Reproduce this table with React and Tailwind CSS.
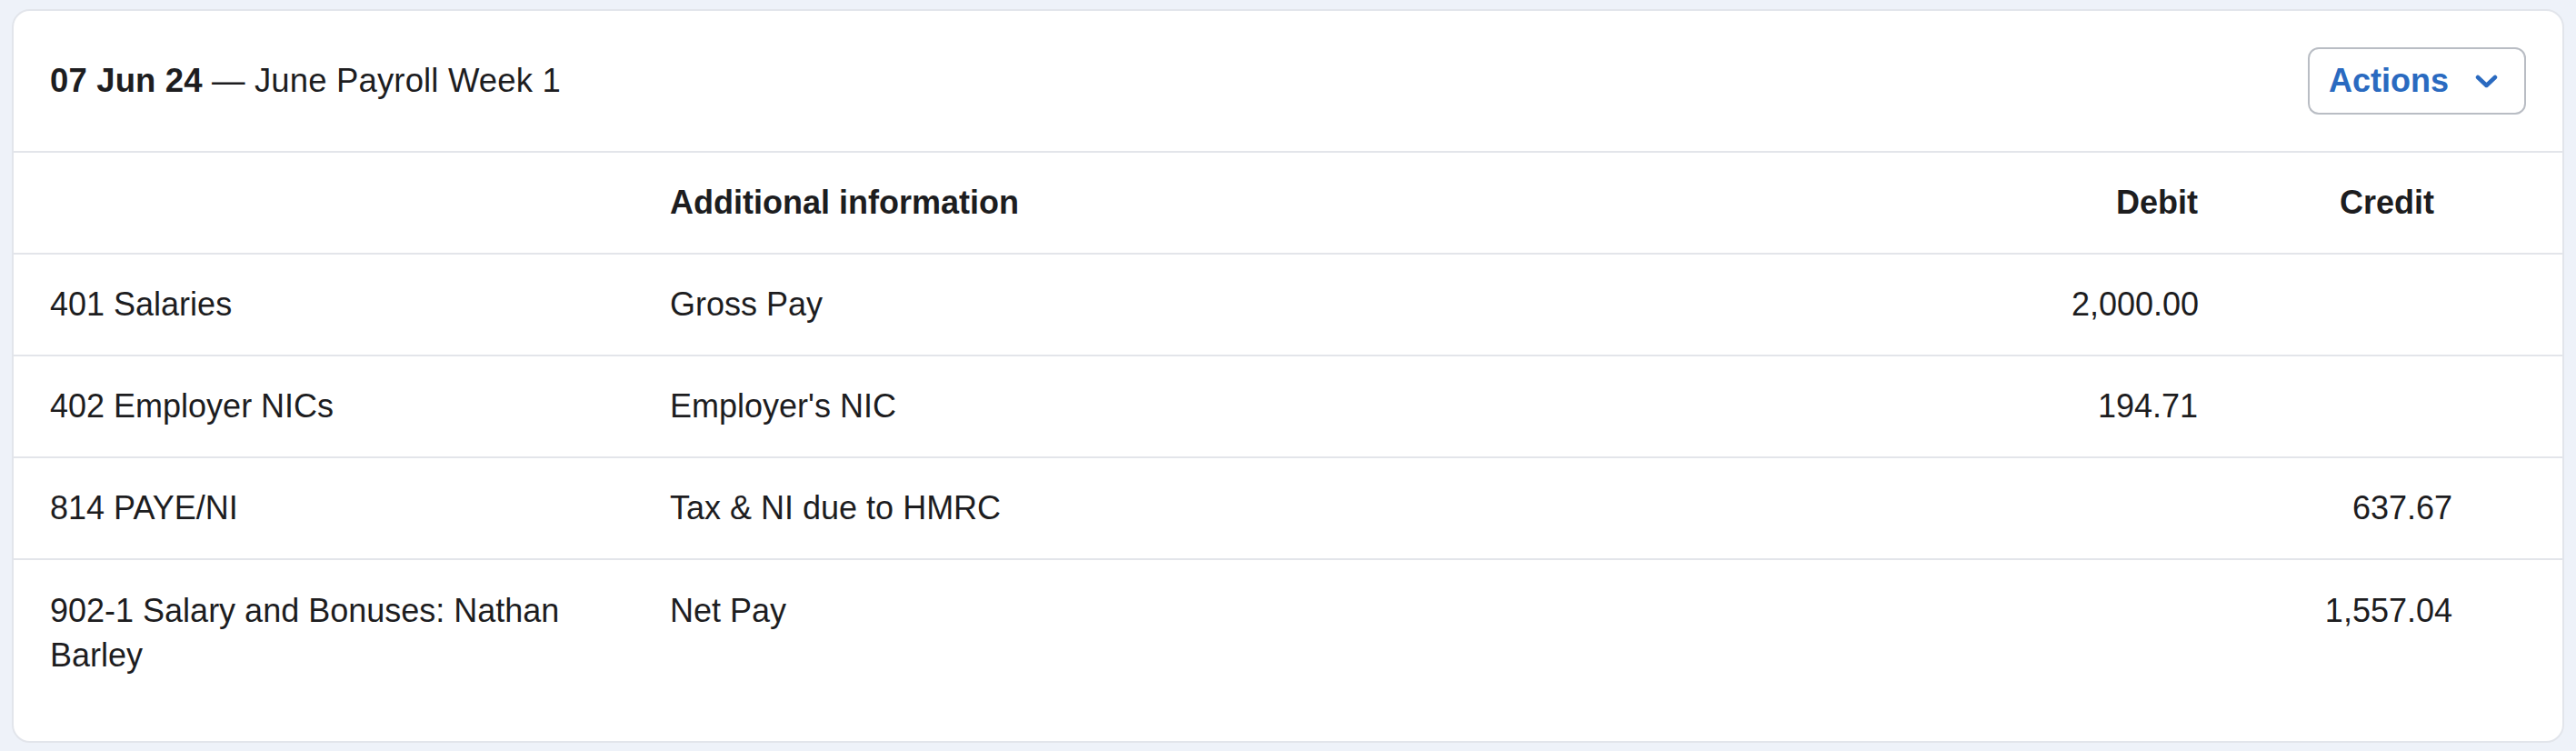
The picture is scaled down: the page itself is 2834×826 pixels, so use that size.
const rows = [
  { account: '401 Salaries', info: 'Gross Pay', debit: '2,000.00', credit: '' },
  { account: '402 Employer NICs', info: "Employer's NIC", debit: '194.71', credit: '' },
  { account: '814 PAYE/NI', info: 'Tax & NI due to HMRC', debit: '', credit: '637.67' },
  { account: '902-1 Salary and Bonuses: Nathan Barley', info: 'Net Pay', debit: '', credit: '1,557.04' },
];

const ChevronDown = () => (
  <svg width="25" height="15" viewBox="0 0 25 15" fill="none" className="shrink-0">
    <path d="M3 3 L12.5 12 L22 3" stroke="#2a6ac0" strokeWidth="4.5" strokeLinecap="round" strokeLinejoin="round" />
  </svg>
);

const App = () => {
  return (
    <div
      className="w-full h-[826px] bg-[#eef2f9] pt-[10px] pb-[9px] px-[13px] text-[#1d1d1f] text-[36px]"
      style={{ fontFamily: '"Liberation Sans", Arial, sans-serif' }}
    >
      <div className="h-full bg-white border-2 border-[#e2e5eb] rounded-[20px] overflow-hidden">
        {/* Header */}
        <div className="h-[156px] flex items-center justify-between pl-[40px] pr-[40px] border-b-2 border-[#e3e5ea]">
          <h2 className="leading-[48px] text-[36.5px] tracking-[0.15px]">
            <span className="font-bold">07 Jun 24</span> — June Payroll Week 1
          </h2>
          <button className="h-[74px] w-[240px] flex items-center justify-between pl-[21px] pr-[29px] border-2 border-[#b9bdc4] rounded-[12px] bg-white">
            <span className="font-bold text-[#2a6ac0] leading-[40px]">Actions</span>
            <ChevronDown />
          </button>
        </div>

        {/* Table */}
        <div className="grid grid-cols-[682px_1fr_260px_280px] leading-[48px]">
          <div className="py-[31px] pl-[40px] border-b-2 border-[#e3e5ea]"></div>
          <div className="py-[31px] pl-[40px] font-bold border-b-2 border-[#e3e5ea]">Additional information</div>
          <div className="py-[31px] pr-[121px] font-bold text-right border-b-2 border-[#e3e5ea]">Debit</div>
          <div className="py-[31px] pr-[141px] font-bold text-right border-b-2 border-[#e3e5ea]">Credit</div>

          {rows.map((row, i) => {
            const last = i === rows.length - 1;
            const line = last ? 'leading-[49px]' : 'border-b-2 border-[#e3e5ea]';
            return [
              <div key={`a${i}`} className={`pt-[31px] pb-[31px] pl-[40px] pr-[40px] ${line}`}>{row.account}</div>,
              <div key={`b${i}`} className={`pt-[31px] pb-[31px] pl-[40px] ${line}`}>{row.info}</div>,
              <div key={`c${i}`} className={`pt-[31px] pb-[31px] pr-[121px] text-right ${line}`}>{row.debit}</div>,
              <div key={`d${i}`} className={`pt-[31px] pb-[31px] pr-[121px] text-right ${line}`}>{row.credit}</div>,
            ];
          })}
        </div>
      </div>
    </div>
  );
};

export default App;
